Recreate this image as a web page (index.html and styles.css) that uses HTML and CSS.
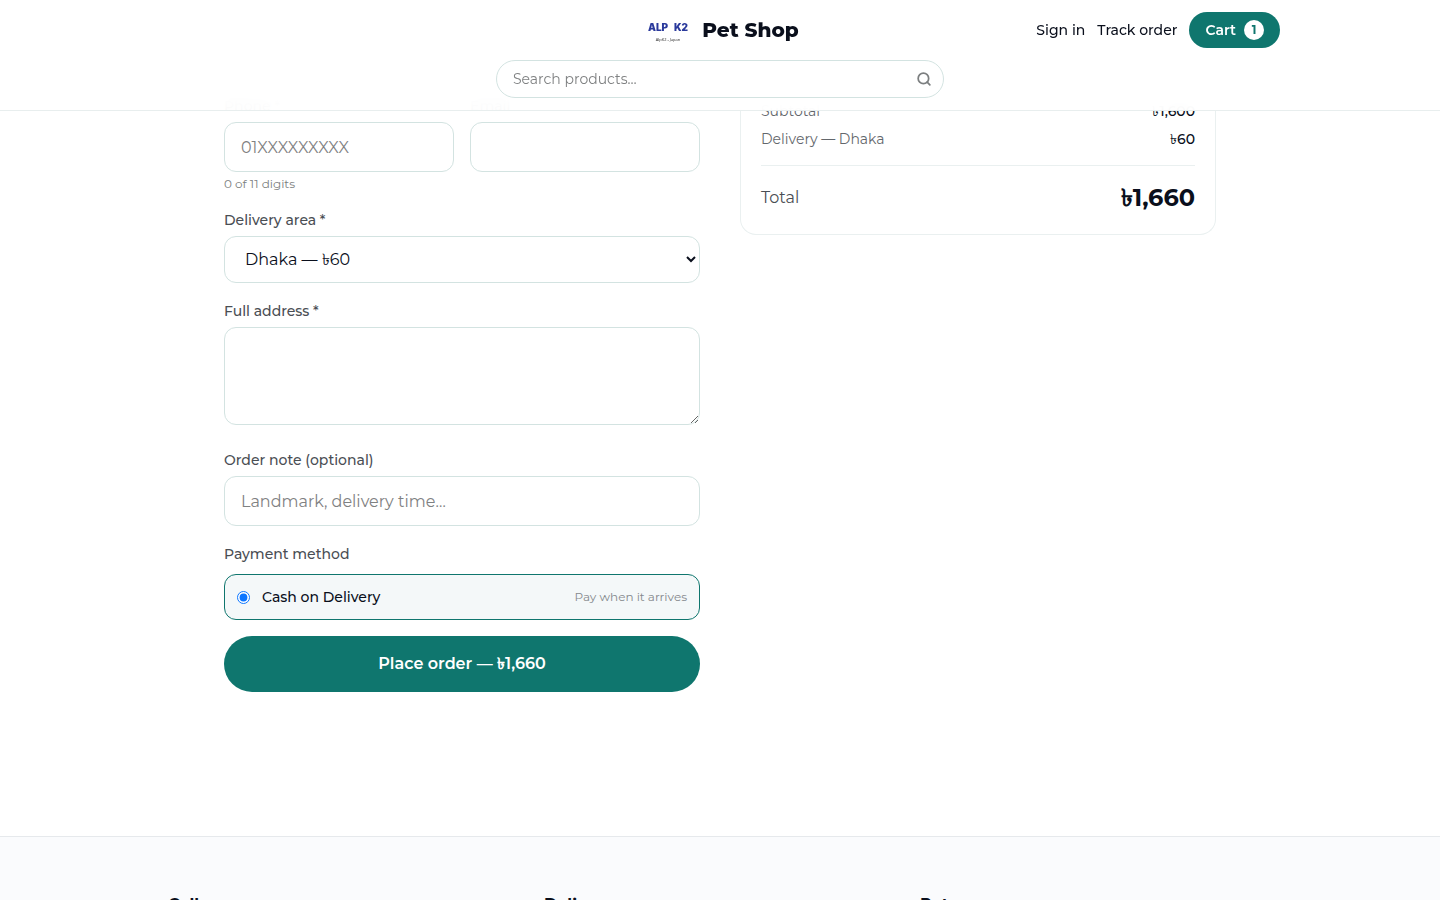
FILE: index.html
```html
<!DOCTYPE html>
<html lang="en">
<head>
  <meta charset="UTF-8">
  <meta name="viewport" content="width=device-width, initial-scale=1.0">
  <title>Checkout - Pet Shop</title>
  <link rel="stylesheet" href="styles.css">
</head>
<body>
  <header class="site-header">
    <div class="header-inner">
      <div class="header-row">
        <a class="brand" href="#">
          <svg class="brand-logo" width="54" height="36" viewBox="0 0 54 36" aria-hidden="true">
            <text x="7" y="19" class="logo-name">ALP</text>
            <text x="47" y="19" class="logo-name" text-anchor="end">K2</text>
            <text x="27" y="29" class="logo-sub" text-anchor="middle">AlpK2 - Japan</text>
          </svg>
          <span class="brand-name">Pet Shop</span>
        </a>
        <nav class="header-nav">
          <a href="#">Sign in</a>
          <a href="#">Track order</a>
          <a class="cart" href="#">Cart <span class="cart-count">1</span></a>
        </nav>
      </div>
      <form class="search">
        <input type="search" placeholder="Search products…" aria-label="Search products">
        <button type="button" aria-label="Search">
          <svg width="14" height="14" viewBox="0 0 24 24" fill="none" stroke="currentColor" stroke-width="3" stroke-linecap="round">
            <circle cx="11" cy="11" r="9"/>
            <path d="M22 22l-4.5-4.5"/>
          </svg>
        </button>
      </form>
    </div>
  </header>

  <main class="checkout">
    <form class="checkout-form">
      <div class="field-row">
        <div class="field">
          <label for="phone">Phone *</label>
          <input type="tel" id="phone" placeholder="01XXXXXXXXX">
          <p class="hint">0 of 11 digits</p>
        </div>
        <div class="field">
          <label for="email">Email</label>
          <input type="email" id="email">
        </div>
      </div>
      <div class="field">
        <label for="area">Delivery area *</label>
        <select id="area">
          <option>Dhaka — ৳60</option>
        </select>
      </div>
      <div class="field">
        <label for="address">Full address *</label>
        <textarea id="address"></textarea>
      </div>
      <div class="field">
        <label for="note">Order note (optional)</label>
        <input type="text" id="note" placeholder="Landmark, delivery time…">
      </div>
      <fieldset class="payment">
        <legend>Payment method</legend>
        <label class="pay-option">
          <input type="radio" name="payment" checked>
          <span class="pay-name">Cash on Delivery</span>
          <span class="pay-note">Pay when it arrives</span>
        </label>
      </fieldset>
      <button type="submit" class="place-order">Place order — ৳1,660</button>
    </form>

    <aside class="summary">
      <div class="summary-row"><span>Subtotal</span><span class="amount">৳1,600</span></div>
      <div class="summary-row"><span>Delivery — Dhaka</span><span class="amount">৳60</span></div>
      <div class="summary-total"><span>Total</span><strong>৳1,660</strong></div>
    </aside>
  </main>

  <footer class="site-footer">
    <div class="footer-inner">
      <h3>Call us</h3>
      <h3>Delivery</h3>
      <h3>Returns</h3>
    </div>
  </footer>
</body>
</html>
```

FILE: styles.css
```css
* {
  box-sizing: border-box;
}
body {
  margin: 0;
  font-family: Montserrat, Inter, sans-serif;
  font-size: 16px;
  line-height: 24px;
  color: #0a0f1c;
  background: #fff;
}
a {
  color: inherit;
  text-decoration: none;
}
input, select, textarea, button {
  font: inherit;
  color: inherit;
}

/* header */
.site-header {
  position: sticky;
  top: 0;
  z-index: 10;
  background: rgba(255, 255, 255, 0.95);
  backdrop-filter: blur(8px);
  border-bottom: 1px solid #e8eeee;
}
.header-inner {
  max-width: 1152px;
  margin: 0 auto;
  padding: 12px 16px;
}
.header-row {
  display: grid;
  grid-template-columns: 1fr auto 1fr;
  align-items: center;
}
.brand {
  grid-column: 2;
  display: flex;
  align-items: center;
  gap: 7px;
}
.brand-logo {
  display: block;
}
.logo-name {
  font: 900 10px Inter, sans-serif;
  fill: #2b3a9c;
}
.logo-sub {
  font: 4px "Open Sans", sans-serif;
  fill: #222;
}
.brand-name {
  font-size: 20px;
  font-weight: 800;
}
.header-nav {
  display: flex;
  justify-content: flex-end;
  align-items: center;
  gap: 12px;
  font-size: 14px;
  font-weight: 500;
}
.cart {
  display: flex;
  align-items: center;
  gap: 8px;
  height: 36px;
  padding: 0 16px;
  border-radius: 18px;
  background: #0f766e;
  color: #fff;
  font-weight: 600;
}
.cart-count {
  width: 20px;
  height: 20px;
  border-radius: 50%;
  background: #fff;
  color: #0f766e;
  font-size: 12px;
  font-weight: 700;
  line-height: 20px;
  text-align: center;
}
.search {
  display: flex;
  align-items: center;
  max-width: 448px;
  height: 38px;
  margin: 12px auto 0;
  padding: 0 12px 0 16px;
  border: 1px solid #d3e3e1;
  border-radius: 19px;
  background: #fff;
}
.search input {
  flex: 1;
  min-width: 0;
  padding: 0;
  border: none;
  outline: none;
  background: none;
  font-size: 14px;
}
.search button {
  display: flex;
  padding: 0;
  border: none;
  background: none;
  color: #7c7f80;
}
::placeholder {
  color: #7f8182;
  opacity: 1;
}

/* checkout, slides under the sticky header */
.checkout {
  display: grid;
  grid-template-columns: 1fr 1fr;
  gap: 40px;
  align-items: start;
  max-width: 1024px;
  margin: -15px auto 0;
  padding: 0 16px 144px;
}
.checkout-form {
  display: flex;
  flex-direction: column;
}
.field-row {
  display: grid;
  grid-template-columns: 1fr 1fr;
  gap: 16px;
}
.field {
  margin-bottom: 18px;
}
.field label, .payment legend {
  display: block;
  padding: 0;
  margin-bottom: 6px;
  font-size: 14px;
  font-weight: 500;
  line-height: 20px;
  color: #4a4e54;
}
.field input, .field select, .field textarea {
  display: block;
  width: 100%;
  height: 50px;
  padding: 0 16px;
  border: 1px solid #d3e3e1;
  border-radius: 12px;
  background: #fff;
}
.field select {
  height: 47px;
}
.field textarea {
  height: 98px;
  margin-bottom: 25px;
  resize: vertical;
}
.field:has(textarea) {
  margin-bottom: 0;
}
.hint {
  margin: 4px 0 0;
  font-size: 12px;
  line-height: 16px;
  color: #7c7f80;
}
.payment {
  margin: 0 0 16px;
  padding: 0;
  border: none;
}
.payment legend {
  margin-bottom: 10px;
}
.pay-option {
  display: flex;
  align-items: center;
  gap: 12px;
  height: 46px;
  padding: 0 12px;
  border: 1px solid #0f766e;
  border-radius: 12px;
  background: #f4f8f9;
}
.pay-option input {
  width: 13px;
  height: 13px;
  margin: 0;
  accent-color: #0a75ff;
}
.pay-name {
  font-size: 14px;
  font-weight: 500;
}
.pay-note {
  margin-left: auto;
  font-size: 12px;
  color: #85898d;
}
.place-order {
  height: 56px;
  border: none;
  border-radius: 28px;
  background: #0f766e;
  color: #fff;
  font-weight: 600;
  cursor: pointer;
}

/* order summary */
.summary {
  padding: 5px 20px 20px;
  border: 1px solid #eaf0f0;
  border-top: none;
  border-radius: 0 0 16px 16px;
}
.summary-row {
  display: flex;
  justify-content: space-between;
  margin-bottom: 8px;
  font-size: 14px;
  line-height: 20px;
  color: #63676c;
}
.amount {
  font-weight: 500;
  color: #0a0f1c;
}
.summary-total {
  display: flex;
  justify-content: space-between;
  align-items: center;
  margin-top: 16px;
  padding-top: 16px;
  border-top: 1px solid #eaf0f0;
  color: #4a4e54;
}
.summary-total strong {
  font-size: 24px;
  font-weight: 700;
  line-height: 32px;
  color: #0a0f1c;
}

/* footer */
.site-footer {
  border-top: 1px solid #e6e9ec;
  background: #fafbfd;
}
.footer-inner {
  display: grid;
  grid-template-columns: repeat(3, 1fr);
  gap: 24px;
  max-width: 1152px;
  margin: 0 auto;
  padding: 56px 24px;
}
.footer-inner h3 {
  margin: 0;
  font-size: 16px;
  font-weight: 700;
}
```
